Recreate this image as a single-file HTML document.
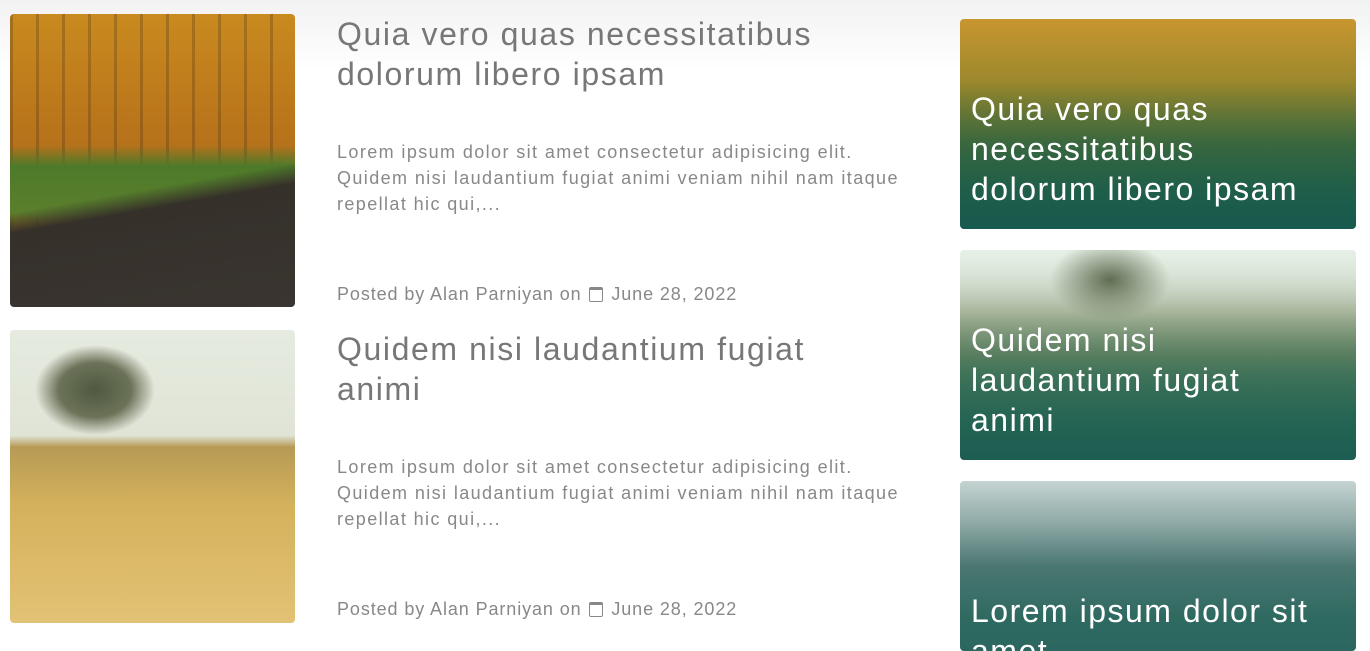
<!DOCTYPE html>
<html style="background:#fff"><head><meta charset="utf-8"><style>
*{margin:0;padding:0;box-sizing:border-box}
body{width:1370px;height:641px;overflow:hidden;font-family:"Liberation Sans",sans-serif;background:linear-gradient(#f2f2f2 0,#fff 70px,#fff);position:relative}
.img{position:absolute;left:10px;width:285px;height:293px;border-radius:4px}
.i1{top:14px;background:
linear-gradient(170deg,transparent 58%,#35302a 64%,#3a3530 100%),
linear-gradient(180deg,transparent 45%,#4d7a2a 52%,#5b7f2c 68%,transparent 75%),
repeating-linear-gradient(90deg,rgba(60,40,20,.25) 0 3px,transparent 3px 26px),
linear-gradient(180deg,#c98a1f,#b8741a 40%,#8a5c1a)}
.i2{top:330px;background:
radial-gradient(ellipse 60px 45px at 85px 60px,#4f5a3f 0,#6b7258 60%,transparent 100%),
linear-gradient(180deg,#e6ebe0 0,#dfe4d6 36%,#b79a55 40%,#d4b25c 60%,#e2c275 100%)}
.t{position:absolute;left:337px;color:#777;font-size:32px;line-height:40px;width:530px;letter-spacing:1.6px}
.p{position:absolute;left:337px;color:#888;font-size:18px;line-height:26px;width:585px;letter-spacing:1.4px}
.m{position:absolute;left:337px;color:#888;font-size:18px;line-height:26px;letter-spacing:.9px}
.cal{display:inline-block;width:14px;height:15px;border:1.5px solid #888;border-top-width:3px;border-radius:2px;vertical-align:-2px;margin:0 2px}
.card{position:absolute;left:960px;width:396px;border-radius:4px;overflow:hidden;color:#fff;font-size:32px;line-height:40px;letter-spacing:1.5px}
.card div{position:absolute;left:11px}
.c1{top:19px;height:210px;background:linear-gradient(180deg,transparent 30%,rgba(20,90,75,.6) 60%,#175a4f 100%),linear-gradient(180deg,#c8962e,#6f7a2c 60%,#2d6a3b)}
.c2{top:250px;height:210px;background:radial-gradient(ellipse 60px 40px at 150px 30px,#5f6e52,transparent),linear-gradient(180deg,rgba(230,240,230,.9) 0,transparent 30%,rgba(30,100,80,.6) 60%,#1c5e52 100%),linear-gradient(180deg,#dfe9df,#7f8f6a 50%,#2a6a55)}
.c3{top:481px;height:170px;background:linear-gradient(180deg,#c5d4d2 0,#8ea9a6 25%,#4b7772 50%,#2f6a61 80%,#2b6660)}
</style></head><body>
<div class="img i1"></div>
<div class="img i2"></div>
<div class="t" style="top:14px">Quia vero quas necessitatibus dolorum libero ipsam</div>
<div class="p" style="top:139px">Lorem ipsum dolor sit amet consectetur adipisicing elit. Quidem nisi laudantium fugiat animi veniam nihil nam itaque repellat hic qui,...</div>
<div class="m" style="top:281px">Posted by Alan Parniyan on <span class="cal"></span> June 28, 2022</div>
<div class="t" style="top:329px">Quidem nisi laudantium fugiat animi</div>
<div class="p" style="top:454px">Lorem ipsum dolor sit amet consectetur adipisicing elit. Quidem nisi laudantium fugiat animi veniam nihil nam itaque repellat hic qui,...</div>
<div class="m" style="top:596px">Posted by Alan Parniyan on <span class="cal"></span> June 28, 2022</div>
<div class="card c1"><div style="top:70px;width:350px">Quia vero quas necessitatibus dolorum libero ipsam</div></div>
<div class="card c2"><div style="top:70px;width:305px">Quidem nisi laudantium fugiat animi</div></div>
<div class="card c3"><div style="top:110px;width:370px">Lorem ipsum dolor sit amet</div></div>
</body></html>
